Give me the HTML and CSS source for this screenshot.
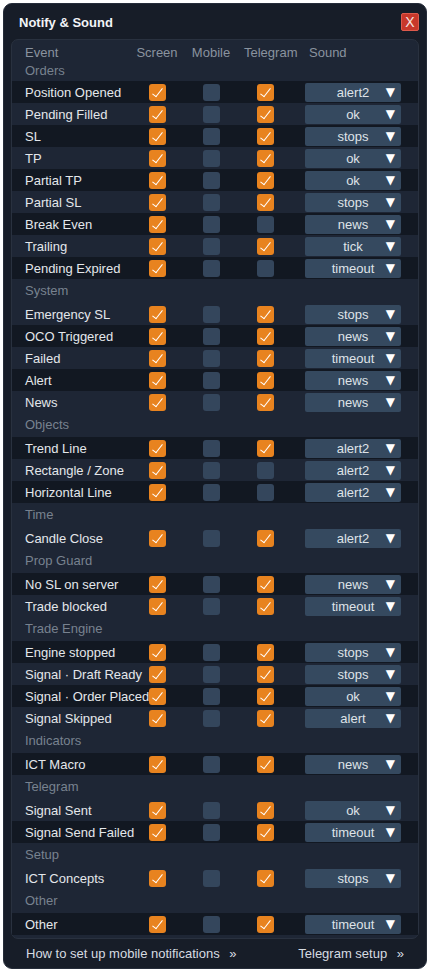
FILE: index.html
```html
<!doctype html>
<html lang="en">
<head>
<meta charset="utf-8">
<title>Notify &amp; Sound</title>
<link rel="stylesheet" href="styles.css">
</head>
<body>

<div class="window">

	<div class="titlebar">
		<h1>Notify &amp; Sound</h1>
		<button class="close">X</button>
	</div>

	<div class="panel">

		<header class="row">
			<span class="label">Event</span>
			<span class="col">Screen</span>
			<span class="col">Mobile</span>
			<span class="col tg">Telegram</span>
			<span class="sound-head">Sound</span>
		</header>

		<h3 class="first">Orders</h3>
		<div class="row"><span class="label">Position Opened</span><i class="box on"></i><i class="box"></i><i class="box on"></i><b class="sel">alert2</b></div>
		<div class="row"><span class="label">Pending Filled</span><i class="box on"></i><i class="box"></i><i class="box on"></i><b class="sel">ok</b></div>
		<div class="row"><span class="label">SL</span><i class="box on"></i><i class="box"></i><i class="box on"></i><b class="sel">stops</b></div>
		<div class="row"><span class="label">TP</span><i class="box on"></i><i class="box"></i><i class="box on"></i><b class="sel">ok</b></div>
		<div class="row"><span class="label">Partial TP</span><i class="box on"></i><i class="box"></i><i class="box on"></i><b class="sel">ok</b></div>
		<div class="row"><span class="label">Partial SL</span><i class="box on"></i><i class="box"></i><i class="box on"></i><b class="sel">stops</b></div>
		<div class="row"><span class="label">Break Even</span><i class="box on"></i><i class="box"></i><i class="box"></i><b class="sel">news</b></div>
		<div class="row"><span class="label">Trailing</span><i class="box on"></i><i class="box"></i><i class="box on"></i><b class="sel">tick</b></div>
		<div class="row"><span class="label">Pending Expired</span><i class="box on"></i><i class="box"></i><i class="box"></i><b class="sel">timeout</b></div>

		<h3>System</h3>
		<div class="row"><span class="label">Emergency SL</span><i class="box on"></i><i class="box"></i><i class="box on"></i><b class="sel">stops</b></div>
		<div class="row"><span class="label">OCO Triggered</span><i class="box on"></i><i class="box"></i><i class="box on"></i><b class="sel">news</b></div>
		<div class="row"><span class="label">Failed</span><i class="box on"></i><i class="box"></i><i class="box on"></i><b class="sel">timeout</b></div>
		<div class="row"><span class="label">Alert</span><i class="box on"></i><i class="box"></i><i class="box on"></i><b class="sel">news</b></div>
		<div class="row"><span class="label">News</span><i class="box on"></i><i class="box"></i><i class="box on"></i><b class="sel">news</b></div>

		<h3>Objects</h3>
		<div class="row"><span class="label">Trend Line</span><i class="box on"></i><i class="box"></i><i class="box on"></i><b class="sel">alert2</b></div>
		<div class="row"><span class="label">Rectangle / Zone</span><i class="box on"></i><i class="box"></i><i class="box"></i><b class="sel">alert2</b></div>
		<div class="row"><span class="label">Horizontal Line</span><i class="box on"></i><i class="box"></i><i class="box"></i><b class="sel">alert2</b></div>

		<h3>Time</h3>
		<div class="row"><span class="label">Candle Close</span><i class="box on"></i><i class="box"></i><i class="box on"></i><b class="sel">alert2</b></div>

		<h3>Prop Guard</h3>
		<div class="row"><span class="label">No SL on server</span><i class="box on"></i><i class="box"></i><i class="box on"></i><b class="sel">news</b></div>
		<div class="row"><span class="label">Trade blocked</span><i class="box on"></i><i class="box"></i><i class="box on"></i><b class="sel">timeout</b></div>

		<h3>Trade Engine</h3>
		<div class="row"><span class="label">Engine stopped</span><i class="box on"></i><i class="box"></i><i class="box on"></i><b class="sel">stops</b></div>
		<div class="row"><span class="label">Signal · Draft Ready</span><i class="box on"></i><i class="box"></i><i class="box on"></i><b class="sel">stops</b></div>
		<div class="row"><span class="label">Signal · Order Placed</span><i class="box on"></i><i class="box"></i><i class="box on"></i><b class="sel">ok</b></div>
		<div class="row"><span class="label">Signal Skipped</span><i class="box on"></i><i class="box"></i><i class="box on"></i><b class="sel">alert</b></div>

		<h3>Indicators</h3>
		<div class="row"><span class="label">ICT Macro</span><i class="box on"></i><i class="box"></i><i class="box on"></i><b class="sel">news</b></div>

		<h3>Telegram</h3>
		<div class="row"><span class="label">Signal Sent</span><i class="box on"></i><i class="box"></i><i class="box on"></i><b class="sel">ok</b></div>
		<div class="row"><span class="label">Signal Send Failed</span><i class="box on"></i><i class="box"></i><i class="box on"></i><b class="sel">timeout</b></div>

		<h3>Setup</h3>
		<div class="row"><span class="label">ICT Concepts</span><i class="box on"></i><i class="box"></i><i class="box on"></i><b class="sel">stops</b></div>

		<h3>Other</h3>
		<div class="row"><span class="label">Other</span><i class="box on"></i><i class="box"></i><i class="box on"></i><b class="sel">timeout</b></div>

	</div>

	<div class="footer">
		<a href="#">How to set up mobile notifications <span class="raquo">»</span></a>
		<a href="#">Telegram setup <span class="raquo">»</span></a>
	</div>

</div>

</body>
</html>
```

FILE: styles.css
```css
body { background: #fff; font: 13px "Liberation Sans", Arial, sans-serif; margin: 0; }

.window { background: #171d28; border: 1px solid #262d3a; border-radius: 9px; box-sizing: border-box; height: 966px; margin: 3px 0 0 3px; padding: 0 7px; width: 424px; }

.titlebar { align-items: center; display: flex; height: 35px; justify-content: space-between; }
.titlebar h1 { color: #f2f4f7; font-size: 13px; font-weight: bold; margin: 2px 0 0 8px; }
.close { background: #c8382b; border: 1px solid #dd5a4c; border-radius: 2px; color: #f6e6e3; font: 14px "Liberation Sans", Arial, sans-serif; height: 18px; line-height: 16px; margin: 1px 0 0 0; padding: 0; width: 18px; }

.panel { background: #1e2635; border: 1px solid #29313f; border-radius: 7px; padding: 3px 0 3px 0; }

.row { align-items: center; display: grid; grid-template-columns: 105px 54px 54px 54px 96px; height: 22px; padding-left: 13px; }
.row .sel { margin-left: 13px; }
div.row:nth-of-type(odd) { background: #121822; }

header.row { color: #8a939f; height: 18px; }
header .col { text-align: center; }
header .tg { padding-left: 6px; }
header .sound-head { padding-left: 17px; }

.label { color: #e4e7eb; white-space: nowrap; }
header .label { color: #8a939f; }

h3 { color: #78828f; font-size: 13px; font-weight: normal; height: 24px; line-height: 24px; margin: 0; padding-left: 13px; }
h3.first { height: 20px; line-height: 20px; }

.box { background: #34465c; border-radius: 3px; display: block; height: 17px; justify-self: center; position: relative; width: 17px; }
.box.on { background: #e8831f; }
.box.on::after { border-bottom: 1.5px solid #fff; border-right: 1.5px solid #fff; content: ""; height: 10px; left: 6px; position: absolute; top: 2px; transform: rotate(38deg); width: 4px; }

.sel { background: #35495f; border-radius: 2px; box-sizing: border-box; color: #dfe3e8; display: block; font-weight: normal; height: 19px; line-height: 19px; position: relative; text-align: center; width: 96px; }
.sel::after { color: #fff; content: "▼"; font: 12px "DejaVu Sans", sans-serif; line-height: 19px; position: absolute; right: 6px; top: 0; }

.footer { display: flex; justify-content: space-between; padding: 7px 15px 0 15px; }
.footer a { color: #d6dbe1; text-decoration: none; }
.raquo { margin-left: 6px; }
```
